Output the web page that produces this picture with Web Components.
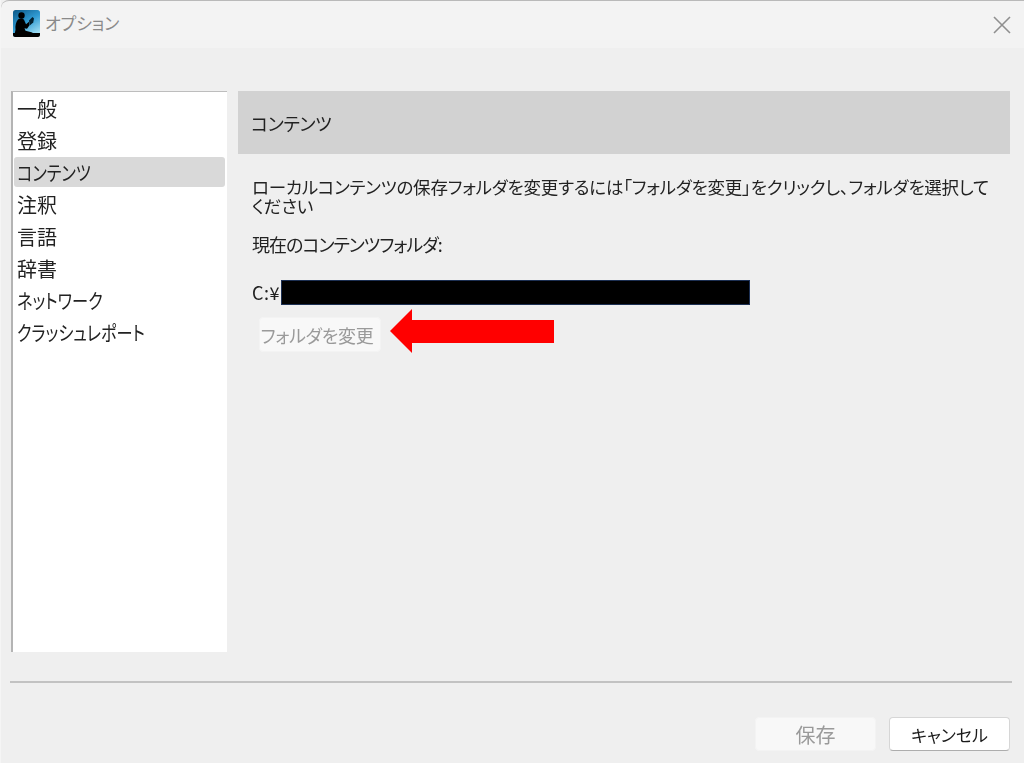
<!DOCTYPE html>
<html lang="ja">
<head>
<meta charset="utf-8">
<title>オプション</title>
<style>
  html, body { margin: 0; padding: 0; background: #efefef; }
  body {
    width: 1024px;
    height: 763px;
    overflow: hidden;
    font-family: "Noto Sans CJK JP", "Noto Sans", sans-serif;
    font-feature-settings: "palt";
    color: #111;
  }
  options-window { filter: blur(0.35px); }
</style>
</head>
<body>
<options-window>
  <title-bar slot="title">オプション</title-bar>
  <nav-list slot="nav">
    <nav-item>一般</nav-item>
    <nav-item>登録</nav-item>
    <nav-item kana selected>コンテンツ</nav-item>
    <nav-item>注釈</nav-item>
    <nav-item>言語</nav-item>
    <nav-item>辞書</nav-item>
    <nav-item kana>ネットワーク</nav-item>
    <nav-item kana>クラッシュレポート</nav-item>
  </nav-list>
  <content-panel slot="panel" heading="コンテンツ"></content-panel>
  <win-button slot="footer" disabled big>保存</win-button>
  <win-button slot="footer">キャンセル</win-button>
</options-window>

<script>
class OptionsWindow extends HTMLElement {
  constructor() {
    super();
    this.attachShadow({ mode: 'open' }).innerHTML = `
      <style>
        :host { display: flex; flex-direction: column; width: 1024px; height: 763px; box-sizing: border-box; border-left: 1px solid #f5f5f5; }
        .main { display: flex; gap: 11px; padding: 43px 14px 0 10px; height: 561px; }
        .sep { height: 2px; background: #c2c2c2; margin: 29px 12px 0 9px; }
        .footer { display: flex; justify-content: flex-end; gap: 13px; padding: 34px 14px 0 0; }
      </style>
      <slot name="title"></slot>
      <div class="main">
        <slot name="nav"></slot>
        <slot name="panel"></slot>
      </div>
      <div class="sep"></div>
      <div class="footer"><slot name="footer"></slot></div>
    `;
  }
}

class TitleBar extends HTMLElement {
  constructor() {
    super();
    this.attachShadow({ mode: 'open' }).innerHTML = `
      <style>
        :host {
          display: flex; align-items: center; height: 48px; box-sizing: border-box;
          background: #f3f3f3; border-top: 1px solid #b9b9b9;
          border-top-left-radius: 8px;
          padding: 0 13px 4px 12px; color: #8a8a8a; font-size: 17px;
        }
        svg.logo { width: 27px; height: 27px; margin: 2px 5px 0 0; flex: none; }
        .text { flex: 1; letter-spacing: -0.1px; }
        svg.close { width: 18px; height: 18px; margin-top: 4px; }
      </style>
      <svg class="logo" viewBox="0 0 27 27">
        <defs>
          <linearGradient id="sky" x1="0.1" y1="0" x2="0.7" y2="1">
            <stop offset="0" stop-color="#0f5c8c"/>
            <stop offset="0.5" stop-color="#2f9ad2"/>
            <stop offset="1" stop-color="#a4e0f4"/>
          </linearGradient>
        </defs>
        <rect width="27" height="27" rx="2.5" fill="url(#sky)"/>
        <path d="M0 23h27v2c0 1-1 2-2 2H2c-1 0-2-1-2-2z" fill="#000"/>
        <circle cx="8.500" cy="5.500" r="3.200" fill="#000"/>
        <path d="M5 9.500c1.500-1.300 5-1.300 6 .2l2 4.500 3-2.500.5 3.500-2.500 3.500-2.500-.5 1 2.500 6 1.500 3 1.500v1H1.500l1-5C2 15.500 3 12 5 9.500z" fill="#000"/>
        <path d="M16 10.500l3.500-3.500 1.500 1.500-.8 4-3.500 3z" fill="#04202f"/>
      </svg>
      <span class="text"><slot></slot></span>
      <svg class="close" viewBox="0 0 18 18"><path d="M1 1l16 16M17 1L1 17" stroke="#8f8f8f" stroke-width="1.6" fill="none"/></svg>
    `;
  }
}

class NavList extends HTMLElement {
  constructor() {
    super();
    this.attachShadow({ mode: 'open' }).innerHTML = `
      <style>
        :host {
          display: flex; flex-direction: column; width: 216px; height: 561px; box-sizing: border-box;
          background: #fff; border-left: 2px solid #b4b4b4; border-top: 1px solid #bdbdbd;
          padding: 0 2px 0 1px; flex: none;
        }
      </style>
      <slot></slot>
    `;
  }
}

class NavItem extends HTMLElement {
  constructor() {
    super();
    this.attachShadow({ mode: 'open' }).innerHTML = `
      <style>
        :host {
          display: block; height: 32px; line-height: 34px; padding-left: 3px;
          font-size: 20px; white-space: nowrap; border-radius: 3px; color: #222;
        }
        :host([selected]) { background: #d9d9d9; height: 30px; line-height: 32px; margin: 1px 0; }
        .t { display: inline-block; transform-origin: left center; }
        :host([kana]) .t { transform: scaleX(0.81); }
      </style>
      <span class="t"><slot></slot></span>
    `;
  }
}

class ContentPanel extends HTMLElement {
  constructor() {
    super();
    this.attachShadow({ mode: 'open' }).innerHTML = `
      <style>
        :host { display: block; width: 772px; flex: none; font-size: 18px; color: #222; }
        .head {
          height: 63px; background: #d2d2d2; display: flex; align-items: center;
          padding-left: 13px; letter-spacing: -0.3px;
        }
        .body { padding: 25px 14px 0 14px; }
        .desc {
          margin: 0; line-height: 19px; letter-spacing: -0.2px; font-size: 17.5px; white-space: nowrap;
          font-family: "Liberation Sans", "Noto Sans CJK JP", sans-serif;
        }
        .label { margin: 15px 0 0; line-height: 24px; letter-spacing: -1px; }
        .path { display: flex; align-items: center; margin-top: 23px; height: 25px; letter-spacing: 0.5px; }
        .mask { width: 467px; background: #000; border: 1px solid #1c2f52; margin: 2px 0 0 1px; height: 23px; }
        .change { display: flex; align-items: flex-start; gap: 9px; margin: 5px 0 0 7px; }
        .change win-button { margin-top: 8px; }
        svg { display: block; }
      </style>
      <div class="head"></div>
      <div class="body">
        <p class="desc">ローカルコンテンツの保存フォルダを変更するには「フォルダを変更」をクリックし、フォルダを選択して<br>ください</p>
        <div class="label">現在のコンテンツフォルダ:</div>
        <div class="path"><span>C:¥</span><span class="mask"></span></div>
        <div class="change">
          <win-button disabled small>フォルダを変更</win-button>
          <svg width="164" height="44" viewBox="0 0 164 44"><path d="M0 22L22 0V11H164V34H22V44z" fill="#ff0000"/></svg>
        </div>
      </div>
    `;
    this.shadowRoot.querySelector('.head').textContent = this.getAttribute('heading');
  }
}

class WinButton extends HTMLElement {
  constructor() {
    super();
    this.attachShadow({ mode: 'open' }).innerHTML = `
      <style>
        :host {
          display: flex; align-items: center; justify-content: center; box-sizing: border-box;
          width: 121px; height: 34px; background: #fff; color: #1a1a1a; font-size: 17px;
          border: 1px solid #d6d6d6; border-bottom-color: #adadad; border-radius: 4px;
          flex: none;
        }
        :host([disabled]) { background: #f8f8f8; color: #9a9a9a; border-color: #f3f3f3; }
        :host([big]) { font-size: 20px; }
        :host([small]) { width: 122px; height: 35px; font-size: 18px; letter-spacing: -0.3px; padding-right: 6px; }
      </style>
      <slot></slot>
    `;
  }
}

customElements.define('options-window', OptionsWindow);
customElements.define('title-bar', TitleBar);
customElements.define('nav-list', NavList);
customElements.define('nav-item', NavItem);
customElements.define('content-panel', ContentPanel);
customElements.define('win-button', WinButton);
</script>
</body>
</html>
